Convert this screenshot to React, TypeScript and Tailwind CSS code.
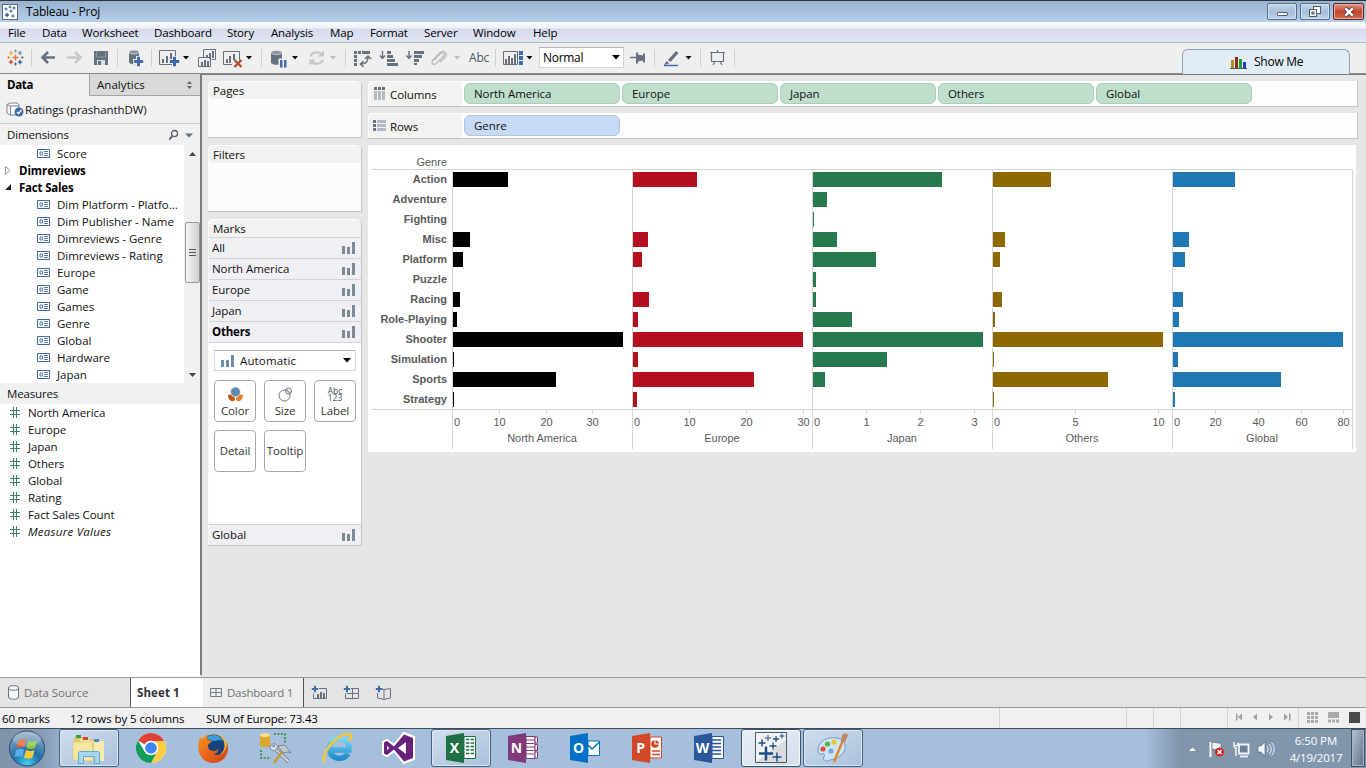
import React from 'react';

type Kids = { children?: React.ReactNode };

const Cell = ({ x, w, y = 43, h = 30, children }: { x: number; w: number; y?: number; h?: number } & Kids) => (
  <svg width={w} height={h} viewBox={`${x} ${y} ${w} ${h}`} className="block shrink-0 overflow-visible" fill="none">
    {children}
  </svg>
);

const SLATE = '#66717f';
const BLUE = '#3f6cae';

const Caret = ({ x, y = 58, c = '#000' }: { x: number; y?: number; c?: string }) => (
  <path d={`M${x - 3} ${y - 2}h6l-3 3.5z`} fill={c} />
);
const Sep = ({ x }: { x: number }) => <path d={`M${x + 0.5} 49v18`} stroke="#cfcfcf" />;
const Plus = ({ x, y, s, c, t = 1 }: { x: number; y: number; s: number; c: string; t?: number }) => (
  <path d={`M${x - s} ${y}h${2 * s}M${x} ${y - s}v${2 * s}`} stroke={c} strokeWidth={t} />
);

const MENU: [string, string][] = [
  ['File', 'w-[34px]'], ['Data', 'w-[40px]'], ['Worksheet', 'w-[72px]'], ['Dashboard', 'w-[73px]'],
  ['Story', 'w-[44px]'], ['Analysis', 'w-[59px]'], ['Map', 'w-[40px]'], ['Format', 'w-[54px]'],
  ['Server', 'w-[49px]'], ['Window', 'w-[60px]'], ['Help', 'w-[40px]'],
];

function TitleBar() {
  return (
    <div className="flex h-[22px] shrink-0 items-center border-t border-[#30343d] bg-gradient-to-b from-[#98b3d1] to-[#b6cfea] pl-[2px] pr-[2px]">
      <svg width="16" height="16" viewBox="0 0 16 16" className="shrink-0">
        <rect x=".5" y=".5" width="15" height="15" fill="#fff" stroke="#5b6b7b" />
        <Plus x={4} y={5} s={1.5} c="#2a5a8a" /><Plus x={8} y={3} s={1.5} c="#2a5a8a" />
        <Plus x={12} y={4} s={1.5} c="#2a5a8a" /><Plus x={9} y={7} s={1.5} c="#2a5a8a" />
        <Plus x={5} y={11} s={2} c="#2a5a8a" t={1.4} /><Plus x={11} y={12} s={1.5} c="#2a5a8a" />
      </svg>
      <span className="ml-[8px] text-[12px] leading-[20px] tracking-[-0.2px] text-black">Tableau - Proj</span>
      <div className="ml-auto flex gap-[3px]">
        <div className="flex h-[17px] w-[30px] items-center justify-center rounded-[2px] border border-[#536c89] bg-gradient-to-b from-[#c5d8ec] via-[#a5bfdc] to-[#b9d0e8] shadow-[inset_0_0_0_1px_#d3e2f2]">
          <div className="mt-[4px] h-[4px] w-[11px] rounded-[1px] border border-[#56606c] bg-white" />
        </div>
        <div className="flex h-[17px] w-[30px] items-center justify-center rounded-[2px] border border-[#536c89] bg-gradient-to-b from-[#c5d8ec] via-[#a5bfdc] to-[#b9d0e8] shadow-[inset_0_0_0_1px_#d3e2f2]">
          <svg width="12" height="12" viewBox="0 0 12 12" fill="#fff" stroke="#56606c">
            <rect x="4.5" y=".5" width="7" height="7" /><rect x=".5" y="3.5" width="7" height="7" /><rect x="3" y="6" width="2" height="2" fill="#9db8d5" />
          </svg>
        </div>
        <div className="flex h-[17px] w-[31px] items-center justify-center rounded-[2px] border border-[#5b2420] bg-gradient-to-b from-[#dd9a8e] via-[#c2452f] to-[#cf6a4f] shadow-[inset_0_0_0_1px_#e5aea3]">
          <svg width="12" height="10" viewBox="0 0 12 10">
            <path d="M2 1l8 8M10 1l-8 8" stroke="#5a3a3a" strokeWidth="4" /><path d="M2.3 1.3l7.4 7.4M9.7 1.3l-7.4 7.4" stroke="#fff" strokeWidth="2.4" />
          </svg>
        </div>
      </div>
    </div>
  );
}

function Toolbar() {
  return (
    <div className="flex h-[31px] shrink-0 border-b border-[#8a8a8a] bg-[#efefef]">
      <Cell x={0} w={34}>
        <Plus x={15.5} y={57.5} s={3} c="#e8762d" t={1.4} />
        <Plus x={11} y={53} s={2.2} c="#e8a33d" t={1.1} /><Plus x={20} y={53} s={2.2} c="#5b879b" t={1.1} />
        <Plus x={11} y={62} s={2.2} c="#c72037" t={1.1} /><Plus x={20} y={62} s={2.2} c="#1f447e" t={1.1} />
        <Plus x={15.5} y={51} s={1.6} c="#7f99b2" /><Plus x={15.5} y={64} s={1.6} c="#5c6692" />
        <Plus x={8.7} y={57.5} s={1.5} c="#eb912c" /><Plus x={22.3} y={57.5} s={1.5} c="#59879b" />
        <Sep x={31} />
      </Cell>
      <Cell x={34} w={56}>
        <path d="M55 57.5H43M48 52l-5.5 5.5 5.5 5.5" stroke={SLATE} strokeWidth="2.6" />
        <path d="M67 57.5h12M75 52l5.5 5.5-5.5 5.5" stroke="#c9c9c9" strokeWidth="2.6" />
      </Cell>
      <Cell x={90} w={34}>
        <path d="M94 51h14v14H94z" fill={SLATE} /><path d="M97 60h8v5h-8z" fill="#dce0e4" /><path d="M98 61h3v4h-3z" fill={SLATE} /><path d="M96.500 51v6h9v-6" stroke="#8a95a1" />
        <Sep x={117} />
      </Cell>
      <Cell x={124} w={31}>
        <path d="M129 52.5v9.5c0 3 10 3 10 0v-9.5z" fill={SLATE} /><ellipse cx="134" cy="52" rx="5" ry="2" fill="#8894a1" stroke="#efefef" strokeWidth=".6" />
        <Plus x={138.5} y={61.5} s={5.5} c="#efefef" t={5} /><Plus x={138.5} y={61.5} s={4.7} c={BLUE} t={3} />
        <Sep x={151} />
      </Cell>
      <Cell x={155} w={37}>
        <path d="M159.500 50.500h16v14h-16z" stroke={SLATE} /><path d="M162 59h2v4h-2zM166 56h2v7h-2zM170 53h2v10h-2z" fill={SLATE} />
        <Plus x={174.500} y={61.500} s={5.500} c="#efefef" t={5} /><Plus x={174.500} y={61.500} s={4.700} c={BLUE} t={3} />
        <Caret x={186} />
      </Cell>
      <Cell x={192} w={28}>
        <path d="M203.500 58V49.500h12v10h-4M198.500 57.500h12v9h-12z" stroke={SLATE} /><path d="M206 55h2v3h-2zM209 53h2v6h-2zM212 51h2v7h-2zM201 62h2v4h-2zM204 60h2v6h-2zM207 61h2v5h-2z" fill={SLATE} />
      </Cell>
      <Cell x={220} w={45}>
        <path d="M232 64.500h-8.500v-13h16v9" stroke={SLATE} /><path d="M226 59h2v4h-2zM229 56h2v7h-2zM233 54h2v6h-2z" fill={SLATE} />
        <path d="M234.500 60l7 7M241.500 60l-7 7" stroke="#b5492f" strokeWidth="2.2" />
        <Caret x={249} /><Sep x={261} />
      </Cell>
      <Cell x={265} w={84}>
        <path d="M271 52.500v10c0 3 11 3 11 0v-10z" fill={SLATE} /><ellipse cx="276.500" cy="52.500" rx="5.500" ry="2" fill="#8894a1" stroke="#efefef" strokeWidth=".6" />
        <path d="M278.500 58.500h9v9h-9z" fill="#efefef" /><path d="M280 60h2.500v7.500h-2.500zM284 60h2.500v7.500h-2.500z" fill={BLUE} />
        <Caret x={295} />
        <path d="M310.500 56.500c1.500-5 9-5.500 12-1.500M323 59.500c-1.500 5-9 5.500-12 1.500" stroke="#c6c6c6" strokeWidth="2.2" /><path d="M324 50.500v6h-6zM309.500 65.500v-6h6z" fill="#c6c6c6" />
        <Caret x={333} c="#bdbdbd" /><Sep x={345} />
      </Cell>
      <Cell x={349} w={27}>
        <path d="M354 51h3v3h-3zM358 51h3v3h-3zM362 51h8v3h-8zM354 55h3v3h-3zM354 59h3v3h-3zM354 63h3v3h-3z" fill={SLATE} />
        <path d="M361 64c5 0 7-3 7-7M365 59l3-3 3 3M363.500 61l-3 3 3 3" stroke={SLATE} strokeWidth="1.500" />
      </Cell>
      <Cell x={376} w={27}>
        <path d="M382.500 51v7M380 55.500l2.500 3 2.500-3" stroke={SLATE} strokeWidth="1.400" /><path d="M387 51h4v3h-4zM387 55h6v3h-6zM387 59h8v3h-8zM387 63h11v3h-11z" fill={SLATE} />
      </Cell>
      <Cell x={403} w={25}>
        <path d="M409 51v7M406.500 55.500l2.500 3 2.500-3" stroke={SLATE} strokeWidth="1.400" /><path d="M414 51h10v3h-10zM414 55h8v3h-8zM414 59h5v3h-5zM414 63h3v2h-3z" fill={SLATE} />
      </Cell>
      <Cell x={428} w={38}>
        <path d="M434 60.500l6.500-7c2-2 5 .5 3 2.800l-7 7c-3 2.700-6-.5-3.500-3.500l7-7c3.500-3.500 8.500.5 5 4.500l-5 5" stroke="#bdbdbd" strokeWidth="1.300" />
        <Caret x={457} c="#bdbdbd" />
      </Cell>
      <div className="flex w-[33px] items-center pl-[3px] text-[12px] tracking-[-0.2px] text-[#4e5a68]">Abc</div>
      <Cell x={499} w={40}>
        <path d="M495.500 49v18" stroke="#cfcfcf" />
        <path d="M503.500 51.500h14v13h-14z" stroke={SLATE} /><path d="M505 59h2v5h-2zM508 56h2v8h-2zM511 58h2v6h-2zM514 54h2v10h-2z" fill={SLATE} />
        <path d="M519 51h4v4h-4zM519 56h4v4h-4zM519 61h4v4h-4z" fill={BLUE} />
        <Caret x={529.500} />
      </Cell>
      <div className="mt-[4px] flex h-[21px] w-[85px] items-center border border-[#d5d5d5] border-t-[#b5b5b5] bg-white pl-[3px] pr-[3px] text-[12px] tracking-[-0.3px] text-black">
        Normal
        <svg width="8" height="5" className="ml-auto"><path d="M0 0h8L4 4.500z" /></svg>
      </div>
      <Cell x={624} w={34}>
        <path d="M630 57.500h7" stroke={SLATE} strokeWidth="1.500" /><path d="M636 52.500h2v2l5 1v-2h2v9h-2v-2l-5 1v2h-2z" fill={SLATE} /><Sep x={654} />
      </Cell>
      <Cell x={658} w={46}>
        <path d="M668 60l8-9 2.500 2-8 9zM666.500 61l3 2.500-5.500 1.500z" fill={SLATE} /><path d="M664 65.500h14" stroke={BLUE} strokeWidth="1.500" />
        <Caret x={688.500} /><Sep x={700} />
      </Cell>
      <Cell x={704} w={40}>
        <path d="M710 52.500h15M711.500 53v8.500h12V53M715 61.500l-2 3.500M720 61.500l2 3.500M717.500 50v2" stroke={SLATE} strokeWidth="1.200" /><Sep x={734} />
      </Cell>
      <div className="ml-auto mr-[16px] mt-[6px] flex h-[25px] w-[168px] items-center rounded-t-[6px] border border-b-0 border-[#95a2ae] bg-[#e0ecf6] pl-[47px] text-[12px] tracking-[-0.25px] text-black">
        <svg width="17" height="13" viewBox="0 0 17 13"><path d="M1 4h3v8h-3z" fill="#b0901c" /><path d="M5 1h3v11h-3z" fill="#8b2a14" /><path d="M9 3h3v9h-3z" fill="#22a02a" /><path d="M13 6h3v6h-3z" fill="#2a35d8" /><path d="M0 12.500h17" stroke="#555" /></svg>
        <span className="ml-[7px]">Show Me</span>
      </div>
    </div>
  );
}

const DIMS = ['Dim Platform - Platfo...', 'Dim Publisher - Name', 'Dimreviews - Genre', 'Dimreviews - Rating', 'Europe', 'Game', 'Games', 'Genre', 'Global', 'Hardware', 'Japan'];
const MEASURES = ['North America', 'Europe', 'Japan', 'Others', 'Global', 'Rating', 'Fact Sales Count'];

const DimRow = ({ children }: Kids) => (
  <div className="flex h-[17px] items-center pl-[37px]">
    <svg width="13" height="10" viewBox="0 0 13 10" fill="none" stroke="#44699b">
      <path d="M.5 .5h12v8H.5z" /><path d="M3 3h2.500v3H3zM7 2.500h4M7 4.500h4M7 6.500h4" strokeWidth=".9" />
    </svg>
    <span className="ml-[7px] whitespace-nowrap tracking-[-0.02px]">{children}</span>
  </div>
);
const MeasureRow = ({ children }: Kids) => (
  <div className="flex h-[17px] items-center pl-[10px]">
    <svg width="10" height="11" viewBox="0 0 10 11"><path d="M3.500 0v11M6.500 0v11M0 3.500h10M0 7.500h10" stroke="#3a8069" /></svg>
    <span className="ml-[8px]">{children}</span>
  </div>
);

function DataPane() {
  return (
    <div className="flex w-[200px] shrink-0 flex-col bg-white">
      <div className="flex h-[22px] shrink-0 bg-[#f1f1f1]">
        <div className="flex w-[89px] items-center pl-[7px] font-bold tracking-[-0.3px] text-black">Data</div>
        <div className="flex flex-1 items-center border-b border-l border-[#a5a5a5] bg-[#d9d9d9] pl-[7px] pr-[8px]">
          <span className="tracking-[0.05px]">Analytics</span>
          <svg width="5" height="8" className="ml-auto"><path d="M0 3h5L2.500 0zM0 5h5L2.500 8z" fill="#666" /></svg>
        </div>
      </div>
      <div className="flex h-[28px] shrink-0 items-center border-b border-[#d0d0d0] bg-[#f1f1f1] pl-[6px]">
        <svg width="19" height="16" viewBox="0 0 19 16" fill="none">
          <path d="M1 2.500L4 1h7l2 2v9l-1 1H4l-3-2zM1 2.500L4.500 4H13M4.500 4v9" stroke="#7b8490" fill="#fbfbfb" />
          <circle cx="13" cy="10" r="4.500" fill="#3f6fae" /><path d="M11 10l1.500 1.500L15.500 8" stroke="#fff" strokeWidth="1.300" />
        </svg>
        <span>Ratings (prashanthDW)</span>
      </div>
      <div className="flex h-[21px] shrink-0 items-center bg-[#f1f1f1] pl-[7px] pr-[7px]">
        <span className="tracking-[-0.15px]">Dimensions</span>
        <svg width="24" height="12" viewBox="0 0 24 12" className="ml-auto"><circle cx="5.500" cy="4.500" r="3" fill="none" stroke="#555e69" strokeWidth="1.300" /><path d="M3.500 7L0 10.500" stroke="#555e69" strokeWidth="1.800" /><path d="M16 4.500h8l-4 4z" fill="#66717f" /></svg>
      </div>
      <div className="flex h-[238px] shrink-0">
        <div className="flex w-[184px] flex-col overflow-hidden">
          <DimRow>Score</DimRow>
          <div className="flex h-[17px] items-center pl-[5px] font-bold tracking-[-0.1px] text-black">
            <svg width="6" height="9"><path d="M.5 .5v8L5 4.500z" fill="#fff" stroke="#999" /></svg><span className="ml-[8px]">Dimreviews</span>
          </div>
          <div className="flex h-[17px] items-center pl-[5px] font-bold tracking-[-0.2px] text-black">
            <svg width="6" height="7"><path d="M6 0v6H0z" fill="#222" /></svg><span className="ml-[8px]">Fact Sales</span>
          </div>
          {DIMS.map((d) => <DimRow key={d}>{d}</DimRow>)}
        </div>
        <div className="flex w-[16px] flex-col items-center bg-[#f0f0f0]">
          <svg width="7" height="4" className="mt-[7px]"><path d="M0 4h7L3.500 0z" fill="#444" /></svg>
          <div className="mt-[66px] flex h-[61px] w-[15px] flex-col items-center justify-center gap-[2px] rounded-[2px] border border-[#979797] bg-gradient-to-r from-[#f5f5f5] to-[#cfcfcf]">
            <i className="h-px w-[7px] bg-[#555]" /><i className="h-px w-[7px] bg-[#555]" /><i className="h-px w-[7px] bg-[#555]" />
          </div>
          <svg width="7" height="4" className="mb-[6px] mt-auto"><path d="M0 0h7L3.500 4z" fill="#444" /></svg>
        </div>
      </div>
      <div className="flex h-[21px] shrink-0 items-center bg-[#f1f1f1] pl-[7px]"><span className="tracking-[-0.15px]">Measures</span></div>
      {MEASURES.map((m) => <MeasureRow key={m}>{m}</MeasureRow>)}
      <MeasureRow><i className="tracking-[0.25px]">Measure Values</i></MeasureRow>
    </div>
  );
}

const MarkRow = ({ name, bold }: { name: string; bold?: boolean }) => (
  <div className="flex h-[21px] shrink-0 items-center border-t border-[#d3d3d6] bg-[#f0eff4] pl-[3px] pr-[6px]">
    <span className={bold ? 'font-bold tracking-[-0.2px] text-black' : ''}>{name}</span>
    <svg width="13" height="12" viewBox="0 0 13 12" className="ml-auto"><path d="M0 4h3v8H0zM5 5h3v7H5zM10 0h3v12h-3z" fill="#7c8997" /></svg>
  </div>
);
const MarkButton = ({ label, children }: { label: string } & Kids) => (
  <div className="flex h-[42px] w-[42px] flex-col items-center justify-center rounded-[4px] border border-[#a6a6a6] bg-white text-[#333]">
    {children}<span className="leading-[16px] tracking-[-0.1px]">{label}</span>
  </div>
);

const Shelf = ({ title }: { title: string }) => (
  <div className="flex h-[18px] shrink-0 items-center rounded-t-[5px] bg-[#f2f2f1] pl-[5px] pt-[2px] shadow-[inset_1px_1px_0_#fff]">{title}</div>
);

function Cards() {
  return (
    <div className="ml-[6px] mt-[6px] flex w-[154px] flex-col gap-[7px]">
      <div className="h-[57px] rounded-t-[5px] border-b border-r border-[#c4c4c4] bg-[#fcfcfe]"><Shelf title="Pages" /></div>
      <div className="h-[67px] rounded-t-[5px] border-b border-r border-[#c4c4c4] bg-[#fcfcfe]"><Shelf title="Filters" /></div>
      <div className="flex h-[327px] flex-col rounded-t-[5px] border-b border-r border-[#c4c4c4] bg-[#fcfcfe]">
        <Shelf title="Marks" />
        <div className="flex flex-1 flex-col pl-px">
          <MarkRow name="All" /><MarkRow name="North America" /><MarkRow name="Europe" /><MarkRow name="Japan" /><MarkRow name="Others" bold />
          <div className="flex flex-1 flex-col border-t border-[#d3d3d6] bg-white pl-[5px] pt-[7px]">
            <div className="flex h-[21px] w-[142px] items-center border border-[#d9d9d9] border-t-[#b9b9b9] bg-white pl-[6px] pr-[4px]">
              <svg width="13" height="12" viewBox="0 0 13 12"><path d="M0 5h3v7H0zM5 5h3v7H5zM10 0h3v12h-3z" fill="#6c8dac" /></svg>
              <span className="ml-[6px] tracking-[0.15px]">Automatic</span>
              <svg width="8" height="5" className="ml-auto"><path d="M0 0h8L4 4.500z" /></svg>
            </div>
            <div className="mt-[9px] flex gap-[8px]">
              <MarkButton label="Color">
                <svg width="17" height="17" viewBox="0 -1 17 17" className="mt-[2px]"><path d="M1 8c2-1.500 7 0 7 3.500C8 16 1 15 1 8z" fill="#c6560f" /><path d="M16 8c-2-1.500-7 0-7 3.500C9 16 16 15 16 8z" fill="#ee7d2b" /><circle cx="8.500" cy="5" r="5" fill="#5f8bb0" stroke="#fff" strokeWidth=".7" /></svg>
              </MarkButton>
              <MarkButton label="Size">
                <svg width="15" height="17" viewBox="0 -1 15 17" className="mt-[2px]" fill="none" stroke="#66717f"><circle cx="6.500" cy="8.500" r="5.500" /><circle cx="10.500" cy="4" r="3" /><path d="M8.500 2.500l4 3" strokeWidth=".7" /></svg>
              </MarkButton>
              <MarkButton label="Label">
                <svg width="18" height="17" viewBox="0 0 18 17" className="mt-[2px] overflow-visible" fill="#46525f" fontSize="8.5" textAnchor="middle"><text x="9" y="7.500">Abc</text><text x="9" y="15.200">123</text></svg>
              </MarkButton>
            </div>
            <div className="mt-[8px] flex gap-[8px]"><MarkButton label="Detail" /><MarkButton label="Tooltip" /></div>
          </div>
          <MarkRow name="Global" />
        </div>
      </div>
    </div>
  );
}

const GENRES = ['Action', 'Adventure', 'Fighting', 'Misc', 'Platform', 'Puzzle', 'Racing', 'Role-Playing', 'Shooter', 'Simulation', 'Sports', 'Strategy'];
type Tick = [number, string];
const PANES: { name: string; bar: string; vals: number[]; ticks: Tick[] }[] = [
  { name: 'North America', bar: 'bg-black', vals: [55, 0, 0, 17, 10, 0, 7, 4, 170, 1, 103, 1], ticks: [[47, '10'], [94, '20'], [140, '30']] },
  { name: 'Europe', bar: 'bg-[#b2101e]', vals: [64, 0, 0, 15, 9, 0, 16, 5, 170, 5, 121, 4], ticks: [[57, '10'], [114, '20'], [171, '30']] },
  { name: 'Japan', bar: 'bg-[#277a4d]', vals: [129, 14, 1, 24, 63, 3, 3, 39, 170, 74, 12, 0], ticks: [[54, '1'], [108, '2'], [162, '3']] },
  { name: 'Others', bar: 'bg-[#8e6900]', vals: [58, 0, 0, 12, 7, 0, 9, 2, 170, 1, 115, 1], ticks: [[83, '5'], [166, '10']] },
  { name: 'Global', bar: 'bg-[#1f77b4]', vals: [62, 0, 0, 16, 12, 0, 10, 6, 170, 5, 108, 2], ticks: [[43, '20'], [86, '40'], [129, '60'], [171, '80']] },
];

function Chart() {
  return (
    <div className="mt-[6px] h-[307px] w-[988px] bg-white pl-[4px] font-['Liberation_Sans',sans-serif] text-[11px] tracking-normal text-[#5a5a5a]">
      <div className="flex h-[25px] w-[981px] items-end border-b border-[#d4d4d4] pb-px">
        <span className="w-[75px] text-right leading-[12px]">Genre</span>
      </div>
      <div className="flex">
        <div className="w-[80px]">
          <div className="h-[240px] border-b border-[#d4d4d4] pr-[5px] text-right font-bold">
            {GENRES.map((g) => <div key={g} className="h-[20px] leading-[18px]">{g}</div>)}
          </div>
        </div>
        {PANES.map((p) => (
          <div key={p.name} className="h-[279px] w-[180px] border-l border-[#d4d4d4]">
            <div className="h-[240px] border-b border-[#d4d4d4]">
              {p.vals.map((v, i) => (
                <div key={i} className="h-[20px] pt-[2px]"><div className={`h-[15px] ${p.bar}`} style={{ width: v }} /></div>
              ))}
            </div>
            <svg width="179" height="38" viewBox="0 0 179 38" className="block overflow-visible" fill="#5a5a5a">
              <text x="1" y="16">0</text>
              {p.ticks.map(([x, t]) => (
                <g key={t}><path d={`M${x - 0.5} 0v4`} stroke="#d4d4d4" /><text x={x - 0.5} y="16" textAnchor="middle">{t}</text></g>
              ))}
              <text x="89" y="32" textAnchor="middle">{p.name}</text>
            </svg>
          </div>
        ))}
        <div className="h-[279px] w-px bg-[#d4d4d4]" />
      </div>
    </div>
  );
}

const PILLS = ['North America', 'Europe', 'Japan', 'Others', 'Global'];

function Sheet() {
  return (
    <div className="ml-[6px] mt-[6px] w-[990px] shrink-0">
      <div className="flex h-[26px] rounded-tl-[5px] border-b border-r border-[#c4c4c4] bg-[#fdfdfd]">
        <div className="flex w-[94px] items-center rounded-tl-[5px] bg-[#f2f2f1] pl-[6px] shadow-[inset_1px_1px_0_#fff]">
          <svg width="11" height="14" viewBox="0 0 11 14"><path d="M0 0h3v3H0zM4 0h3v3H4zM8 0h3v3H8z" fill="#69737f" /><path d="M0 4h3v9H0zM4 4h3v9H4zM8 4h3v9H8z" fill="#b3bac3" /></svg>
          <span className="ml-[5px] pt-[2px]">Columns</span>
        </div>
        <div className="flex gap-[2px] pl-[2px] pt-[2px]">
          {PILLS.map((p) => <div key={p} className="flex h-[21px] w-[156px] items-center rounded-[6px] border border-[#a9cfb9] bg-[#bfdfcd] pl-[9px]">{p}</div>)}
        </div>
      </div>
      <div className="mt-[6px] flex h-[26px] rounded-tl-[5px] border-b border-r border-[#c4c4c4] bg-[#fdfdfe]">
        <div className="flex w-[94px] items-center rounded-tl-[5px] bg-[#f2f2f1] pl-[5px] shadow-[inset_1px_1px_0_#fff]">
          <svg width="13" height="11" viewBox="0 0 13 11"><path d="M0 0h3v3H0zM0 4h3v3H0zM0 8h3v3H0z" fill="#69737f" /><path d="M4 0h9v3H4zM4 4h9v3H4zM4 8h9v3H4z" fill="#b3bac3" /></svg>
          <span className="ml-[4px] pt-[2px]">Rows</span>
        </div>
        <div className="pl-[2px] pt-[2px]"><div className="flex h-[21px] w-[156px] items-center rounded-[6px] border border-[#b0c4e2] bg-[#c9daf5] pl-[9px]">Genre</div></div>
      </div>
      <Chart />
    </div>
  );
}

function SheetTabs() {
  return (
    <div className="flex h-[31px] shrink-0 border-b border-t border-[#9a9a9a] bg-[#e4e4e4] text-[#737373]">
      <div className="flex w-[130px] items-center pl-[8px]">
        <svg width="11" height="15" viewBox="0 0 11 15" fill="#f5f8fa" stroke="#66717f"><path d="M.5 3v9c0 3 10 3 10 0V3" /><ellipse cx="5.500" cy="3" rx="5" ry="2.300" /></svg>
        <span className="ml-[5px]">Data Source</span>
      </div>
      <div className="flex w-[73px] items-center border-l border-[#555] bg-white pl-[6px] font-bold tracking-[0.1px] text-[#333]">Sheet 1</div>
      <div className="flex w-[101px] items-center border-r border-[#555] bg-[#ededed] pl-[7px]">
        <svg width="12" height="9" viewBox="0 0 12 9" fill="none" stroke="#737b86"><path d="M.5 .5h11v8H.5zM6 .5v8M.5 4.500h11" /></svg>
        <span className="ml-[5px] whitespace-nowrap tracking-[-0.25px]">Dashboard 1</span>
      </div>
      <Cell x={304} w={90} y={678} h={29}>
        <path d="M319 688.500h7.500v10h-13v-5" stroke={SLATE} /><path d="M317 694h2v4h-2zM320 692h2v6h-2zM323 693h2v5h-2z" fill={SLATE} />
        <path d="M351 688.500h7.500v10h-13v-5M352.500 689v9M347 693.500h11" stroke={SLATE} />
        <path d="M377.500 693v5l6.500 1.500 6.500-1.500v-9.500l-6.500 1v10M384 689.500l-3-1" stroke={SLATE} />
        <Plus x={315} y={689} s={3.200} c={BLUE} t={2} /><Plus x={347} y={689} s={3.200} c={BLUE} t={2} /><Plus x={379} y={689} s={3.200} c={BLUE} t={2} />
      </Cell>
    </div>
  );
}

function StatusBar() {
  return (
    <div className="flex h-[20px] shrink-0 items-center bg-[#f0f0f0] pl-[2px] text-black">
      <span className="w-[68px] pt-px tracking-[-0.2px]">60 marks</span><span className="w-[136px] pt-px">12 rows by 5 columns</span><span className="pt-px tracking-[-0.2px]">SUM of Europe: 73.43</span>
      <div className="ml-auto">
        <Cell x={990} w={376} y={708} h={20}>
          <path d="M999.500 708v20M1126.500 708v20M1153.500 708v20M1180.500 708v20M1227.500 708v20M1298.500 708v20" stroke="#d4d4d4" />
          <path d="M1236 714h1.500v7h-1.500zM1242 714v7l-4-3.500zM1257 714v7l-4-3.500zM1269 714v7l4-3.500zM1284 714v7l4-3.500zM1289 714h1.500v7h-1.500z" transform="translate(0 -.5)" fill="#a0a0a0" />
          <path d="M1307 713.500h11M1307 717.500h11M1307 721.500h11" stroke="#aaa" strokeWidth="3" strokeDasharray="3 1" />
          <path d="M1328 712h11v6h-11z" fill="#aaa" /><path d="M1328 721h11" stroke="#aaa" strokeWidth="3" strokeDasharray="3 1" />
          <path d="M1349 712h11v11h-11z" fill="#4a4a4a" />
        </Cell>
      </div>
    </div>
  );
}

const Office = ({ x, c, l, children }: { x: number; c: string; l: string } & Kids) => (
  <g>
    {children}
    <path d={`M${x} 736l18-3v30l-18-3z`} fill={c} />
    <text x={x + 8.5} y="753" textAnchor="middle" fill="#fff" fontSize="14" fontWeight="bold">{l}</text>
  </g>
);
const Task = ({ bright, children }: { bright?: boolean } & Kids) => (
  <div className={bright
    ? 'h-[38px] w-[60px] overflow-hidden rounded-[3px] border border-[#3f5165] bg-gradient-to-br from-[#e8eef6] to-[#d3dfed] shadow-[inset_0_0_0_1px_#f4f8fc]'
    : 'h-[38px] w-[60px] overflow-hidden rounded-[3px] border border-[#4c6078] bg-gradient-to-br from-[#d0deee] to-[#a9c0dc] shadow-[inset_0_0_0_1px_#dbe7f3]'}>
    {children}
  </div>
);

function Taskbar() {
  return (
    <div className="flex h-[40px] shrink-0 border-t border-[#3f4b59] bg-[linear-gradient(90deg,#7f93aa_0px,#8399b2_40px,#a6bfdc_75px,#a6bfdc_1145px,#8195ac_1180px,#8195ac_100%)]">
      <Cell x={0} w={59} y={729} h={39}>
        <defs>
          <radialGradient id="orb" cx=".5" cy=".95" r=".9"><stop offset="0" stopColor="#3fd0f5" /><stop offset=".45" stopColor="#1e6fa8" /><stop offset="1" stopColor="#8ea9c0" /></radialGradient>
          <linearGradient id="fox" x1="0" y1="0" x2="1" y2="1"><stop offset="0" stopColor="#f39a1f" /><stop offset=".5" stopColor="#e8641b" /><stop offset="1" stopColor="#cf3f17" /></linearGradient>
          <linearGradient id="ie" x1="0" y1="0" x2="0" y2="1"><stop offset="0" stopColor="#7fd6f7" /><stop offset="1" stopColor="#1c8ed0" /></linearGradient>
        </defs>
        <circle cx="27" cy="748.500" r="17.500" fill="url(#orb)" stroke="#2a4a66" />
        <path d="M18 741c3-2 6-2 8-1l-1.500 7.500c-3-1-5-1-8 .5z" fill="#e8602c" /><path d="M28 740.500c3 1.500 6 1.500 9 0l-2 7.500c-3 1.500-6 1-8.500 0z" fill="#8cc63f" />
        <path d="M16 750c3-1.500 5-1.500 8-.5l-1.500 7.500c-3-1-5-1-8 .5z" fill="#5aaee8" /><path d="M26 750c3 1 5.500 1.500 8.500 0l-2 7.500c-3 1.500-5.500 1.500-8.500 0z" fill="#fcc934" />
        <ellipse cx="27" cy="739" rx="14" ry="7.500" fill="#fff" opacity=".22" />
      </Cell>
      <Task>
        <Cell x={60} w={58} y={730} h={36}>
          <path d="M74 737h9l2 2h13v20H74z" fill="#e3c468" /><path d="M76 735h5v3h-5z" fill="#39a04a" /><path d="M80 739h9l2 2h12v19H80z" fill="#f3de8f" /><path d="M83 737h5v3h-5z" fill="#d04a35" /><path d="M86 741h18v20H86z" fill="#f8ebb0" /><path d="M94 739h5v3h-5z" fill="#4a90c8" /><path d="M73 742h20v19l-20-1z" fill="#f6e6a0" stroke="#dcc377" strokeWidth=".7" /><path d="M93 743v18" stroke="#dcc377" />
          <path d="M78.500 763.500v-10q0-2 2-2h17q2 0 2 2v10h-5v-7h-11v7z" fill="#a5d8f0" stroke="#5badd6" />
        </Cell>
      </Task>
      <Cell x={119} w={312} y={729} h={39}>
        <circle cx="151" cy="748" r="15" fill="#fff" />
        <path d="M151 748L138 740.500A15 15 0 0 1 164 740.500z" fill="#db4437" /><path d="M151 741h13.500A15 15 0 0 1 151 763l6-11z" fill="#ffcd40" /><path d="M144.500 751.500L138 740.500A15 15 0 0 0 151 763l6-11z" fill="#0f9d58" />
        <circle cx="151" cy="748" r="7.300" fill="#fff" /><circle cx="151" cy="748" r="5.800" fill="#4285f4" />
        <circle cx="214" cy="747" r="13" fill="#f6b42b" />
        <circle cx="213.500" cy="745.500" r="11" fill="#15427f" /><path d="M206 738c5-5 14-4 17 3-4-2-6 0-9 0-4 0-5-2-8-3z" fill="#3d9bd9" />
        <path d="M200 737c1 1.500 2 1.500 4 .5 1-2 2.500-2.500 4.500-2.500-1.500 1.500-2 3-1 4.500l4 1.500c.5 2-3.500 2.500-3.500 5 0 5 6.500 6.500 10.500 3 0 3-2.500 5-5 5.500 5 2 11-1 12.500-7 .5 0 1-3 .5-6 2.500 5 2 12-2 16.500-6 6.500-16.500 6.500-22 .5-5-5.500-5.500-14-2.500-21.500z" fill="url(#fox)" />
        <rect x="260" y="734" width="10" height="13" rx="2" fill="#dfa72c" /><ellipse cx="265" cy="735" rx="5" ry="2" fill="#f6dc8c" />
        <path d="M274 734h11v10M261 750v8h10" stroke="#2d8a32" strokeWidth="1.600" strokeDasharray="2 1.500" />
        <path d="M273 747l16 15" stroke="#69737d" strokeWidth="3.500" /><path d="M273 747l16 15" stroke="#d4dade" strokeWidth="2" /><path d="M270.500 746c0-1 1-1 1.500 0l2 1 1-1-1.500-2.500c3 0 4.500 2 3.500 5l-2.500 2c-3 0-5-2-4-4.500z" fill="#dfe4e8" stroke="#7b858f" /><path d="M283 750l-9 13" stroke="#c09c38" strokeWidth="2.500" /><path d="M278 746l7-1 6 8-3-1-5 1z" fill="#bfc7ce" stroke="#69737d" strokeWidth=".7" />
        <path d="M348 753.500c-3 6-13 6.500-17 .5-4-7 0-15.500 8-15.500 7 0 10.500 5 10 11.500h-17" stroke="url(#ie)" strokeWidth="5.500" />
        <path d="M325 762c-6-5 10-28 24-28 4 1 1 5 0 7" stroke="#f0c93b" strokeWidth="2.500" />
        <path d="M383 742l4-2 7 5 10-12 10 4v22l-10 4-10-12-7 5-4-2z" fill="#fff" stroke="#fff" strokeWidth="2" /><path d="M384 742.500l3-1.500 7 5.500 10-12 9 3.500v20l-9 3.500-10-12-7 5.500-3-1.500zM387 746v4l2.500-2zM398 748l8 6v-12z" fill="#68217a" fillRule="evenodd" />
      </Cell>
      <Task>
        <Cell x={432} w={58} y={730} h={36}>
          <Office x={446} c="#1e7145" l="X"><path d="M464 736.500h11.500v22H464z" fill="#fff" stroke="#1e7145" /><path d="M466 739.500h8M466 743h8M466 746.500h8M466 750h8M466 753.500h8" stroke="#1e7145" strokeWidth="1.500" /><path d="M470 738v19" stroke="#fff" strokeWidth="1.200" /></Office>
        </Cell>
      </Task>
      <Cell x={491} w={250} y={729} h={39}>
        <Office x={508} c="#80397b" l="N"><path d="M526 736.500h9v22h-9z" fill="#fff" stroke="#80397b" /><path d="M526 740h8M526 743.500h8M526 747h8M526 750.500h8M526 754h8" stroke="#80397b" /><path d="M535 737h2.500v6H535zM535 744.500h2.500v6H535zM535 752h2.500v6H535z" fill="#fff" stroke="#80397b" /></Office>
        <Office x={570} c="#0072c6" l="O"><path d="M588 741h11.500v14.500H588z" fill="#fff" stroke="#0072c6" /><path d="M588 745l4 4 7.500-7" stroke="#0072c6" strokeWidth="1.500" /></Office>
        <Office x={632} c="#d24726" l="P"><path d="M650 737h11.500v21H650z" fill="#fff" stroke="#d24726" /><circle cx="655" cy="744" r="3.800" fill="#d24726" /><path d="M655 744v-5M655 744h5" stroke="#fff" /><path d="M652 751h8M652 754.500h8" stroke="#d24726" strokeWidth="1.400" /></Office>
        <Office x={694} c="#2b579a" l="W"><path d="M712 736.500h11.500v22H712z" fill="#fff" stroke="#2b579a" /><path d="M712 740h9M712 743.500h9M712 747h9M712 750.500h9M712 754h9" stroke="#2b579a" strokeWidth="1.300" /></Office>
      </Cell>
      <Task bright>
        <Cell x={742} w={58} y={730} h={36}>
          <path d="M755.500 732.500h31v30h-31z" fill="#f2f2f2" stroke="#4a5a6a" /><path d="M756 762L786 740v22z" fill="#d9dde0" />
          <Plus x={762} y={743} s={3.500} c="#1d4f86" t={1.500} /><Plus x={768} y={738} s={3} c="#1d4f86" /><Plus x={776} y={739} s={3} c="#1d4f86" t={1.300} /><Plus x={782} y={736} s={2.500} c="#1d4f86" /><Plus x={773} y={746} s={3.500} c="#1d4f86" t={1.300} />
          <Plus x={766} y={753.500} s={7} c="#1d4f86" t={2.500} /><Plus x={777} y={757} s={4.500} c="#1d4f86" t={1.500} />
        </Cell>
      </Task>
      <div className="w-[2px]" />
      <Task>
        <Cell x={804} w={58} y={730} h={36}>
          <path d="M818 751c-1-9 9-15 19-13 9 2 10 10 6 15-5 6-10 6-13 7-3 1-4 2-6 0-2-3 2-4 0-6-3-1-5 2-6-3z" fill="#cfe4f4" stroke="#6d9cc4" />
          <circle cx="823" cy="749" r="2.600" fill="#e04a36" /><circle cx="827.500" cy="744" r="2.600" fill="#56b34a" /><circle cx="834" cy="742" r="2.600" fill="#f0c22c" /><circle cx="831" cy="751" r="2.600" fill="#7aa8dc" />
          <path d="M843 740l-9 22" stroke="#dd8b2c" strokeWidth="2.500" /><path d="M841 742l1-7c2-2 5-2 6 0l-3 7z" fill="#b98a5c" />
        </Cell>
      </Task>
      <div className="ml-auto flex">
        <Cell x={1180} w={102} y={729} h={39}>
          <path d="M1188 751.500h9l-4.500-4.500z" fill="#f4f7fa" stroke="#4d5f73" strokeWidth=".5" />
          <path d="M1210.500 742v15" stroke="#fff" strokeWidth="2" /><path d="M1212 742.500c3-1 5 1.500 9 .5v7c-4 1-6-1.500-9-.5z" fill="#f5f7fa" stroke="#5b6470" strokeWidth=".6" /><circle cx="1219.500" cy="752" r="4.500" fill="#d42b20" /><path d="M1217.500 750l4 4M1221.500 750l-4 4" stroke="#fff" strokeWidth="1.400" />
          <path d="M1239 744.500h9.500v9H1239z" fill="#6c8096" stroke="#f3f6f9" strokeWidth="1.800" /><path d="M1240 756.500h8" stroke="#f3f6f9" strokeWidth="1.800" /><path d="M1234 742v4q0 2 2 2v8M1233.500 745.500h4.500v-3" stroke="#f3f6f9" strokeWidth="1.500" />
          <path d="M1258 746h3l4-4v14l-4-4h-3z" fill="#f3f6f9" stroke="#4d5f73" strokeWidth=".6" /><path d="M1267 746c1.500 2 1.500 4 0 6M1269 744c3 3 3 7 0 10M1271.500 742.500c3.500 4 3.500 9 0 13" stroke="#f3f6f9" />
        </Cell>
        <div className="flex w-[68px] flex-col items-center pt-[3px] leading-[17px] text-white"><span>6:50 PM</span><span className="tracking-[-0.2px]">4/19/2017</span></div>
        <div className="ml-px h-[38px] w-[14px] border border-[#3e4f63] bg-gradient-to-br from-[#b9c6d4] to-[#5f7288] shadow-[inset_0_0_0_1px_#a7b6c6]" />
        <div className="w-px" />
      </div>
    </div>
  );
}

export default function App() {
  return (
    <div className="flex h-[768px] w-[1366px] flex-col overflow-hidden bg-[#e6e6e6] font-['Open_Sans',sans-serif] text-[11.5px] leading-[16px] tracking-[-0.08px] text-[#111]">
      <TitleBar />
      <div className="flex h-[21px] shrink-0 items-center border-b border-[#b5b9cc] bg-[linear-gradient(#fdfdff_0%,#eef0f8_30%,#d5daeb_35%,#e2e6f4_100%)] pl-[8px] pt-[2px] tracking-[-0.15px] text-black">
        {MENU.map(([m, w]) => <span key={m} className={w}>{m}</span>)}
      </div>
      <Toolbar />
      <div className="flex h-[603px] shrink-0">
        <DataPane />
        <div className="mb-[2px] w-[2px] shrink-0 bg-[#7b7b7b]" />
        <div className="flex flex-1 items-start border-t border-[#7b7b7b]">
          <Cards />
          <Sheet />
        </div>
      </div>
      <SheetTabs />
      <StatusBar />
      <Taskbar />
    </div>
  );
}
